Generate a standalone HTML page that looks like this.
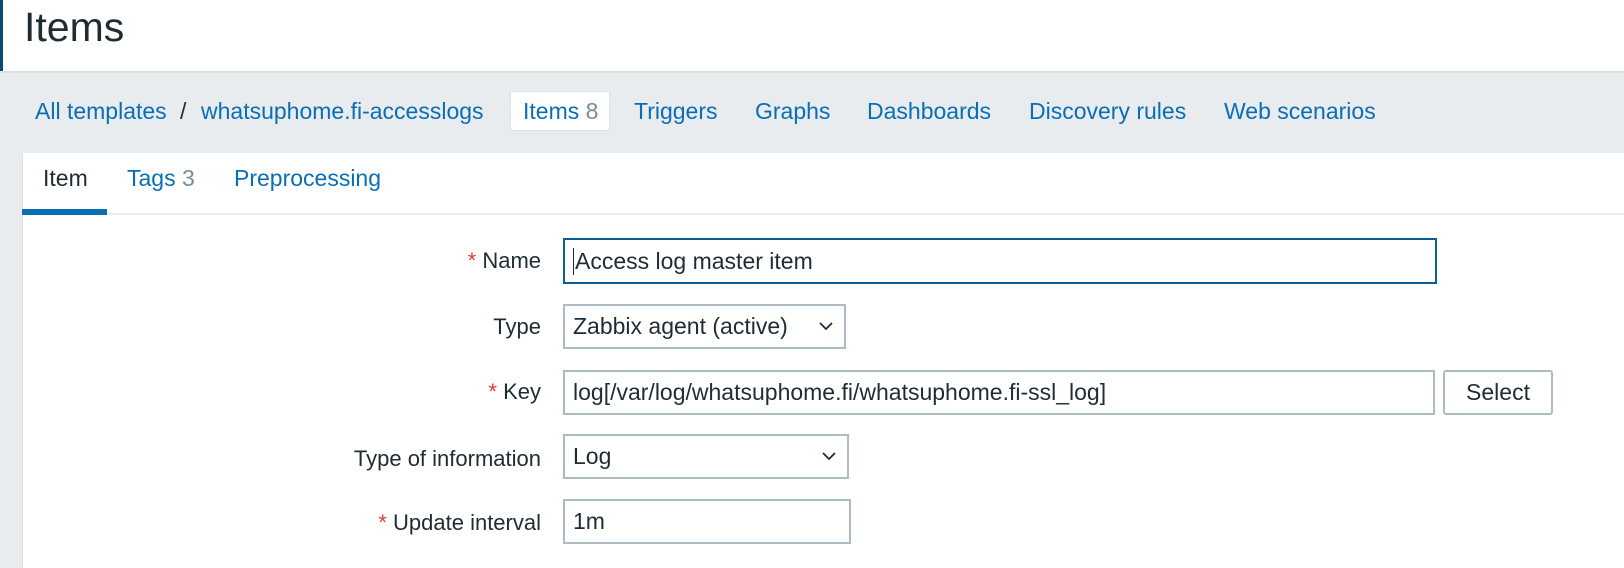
<!DOCTYPE html>
<html><head><style>
body{margin:0;width:1624px;height:568px;overflow:hidden;background:#fff;font-family:"Liberation Sans",Arial,sans-serif;position:relative}
.a{position:absolute;white-space:nowrap}
.lb{border-left:3px solid #0b4a6f;position:absolute;left:0;top:0;height:568px}
.nav{position:absolute;left:0;top:71px;width:1624px;height:80px;background:#e9ecef;border-top:2px solid #dde1e5;border-bottom:2px solid #dde1e5}
.l{color:#0a6eb4;font-size:23px}
.lab{font-size:22px;color:#1f2c33;text-align:right;width:400px;left:141px}
.st{color:#e43a3a}
.in{position:absolute;box-sizing:border-box;border:2px solid #acbbc4;background:#fff;font-size:23px;color:#1f2c33;padding-left:8px;display:flex;align-items:center}
.chev{position:absolute;right:10px;top:14px}
</style></head><body>
<div class="lb"></div>
<div class="a" style="left:24px;top:4px;font-size:41px;color:#1f2c33">Items</div>
<div class="nav"></div>
<div class="a l" style="left:35px;top:98px">All templates</div>
<div class="a" style="left:180px;top:98px;font-size:23px;color:#1f2c33">/</div>
<div class="a l" style="left:201px;top:98px">whatsuphome.fi-accesslogs</div>
<div class="a" style="left:510px;top:91px;width:100px;height:40px;box-sizing:border-box;background:#fff;border:1px solid #dfe4e7;border-radius:2px"></div>
<div class="a" style="left:523px;top:98px;font-size:23px;color:#0a6eb4">Items <span style="color:#768d99">8</span></div>
<div class="a l" style="left:634px;top:98px">Triggers</div>
<div class="a l" style="left:755px;top:98px">Graphs</div>
<div class="a l" style="left:867px;top:98px">Dashboards</div>
<div class="a l" style="left:1029px;top:98px">Discovery rules</div>
<div class="a l" style="left:1224px;top:98px">Web scenarios</div>
<div class="a" style="left:0;top:153px;width:22px;height:415px;background:#e9ecef"></div>
<div class="a" style="left:22px;top:153px;width:1602px;height:415px;background:#fff;border-left:1px solid #dde1e5"></div>
<div class="a" style="left:22px;top:213px;width:1602px;height:2px;background:#e9ecef"></div>
<div class="a" style="left:22px;top:209px;width:85px;height:6px;background:#0a6eb4"></div>
<div class="a" style="left:43px;top:165px;font-size:23px;color:#1f2c33">Item</div>
<div class="a l" style="left:127px;top:165px">Tags <span style="color:#768d99">3</span></div>
<div class="a l" style="left:234px;top:165px">Preprocessing</div>

<div class="a lab" style="top:248px"><span class="st">*</span> Name</div>
<div class="in" style="left:563px;top:238px;width:874px;height:46px;border-color:#0b5e93"><span style="border-left:1px solid #1f2c33;padding-left:1px">Access log master item</span></div>
<div class="a lab" style="top:314px">Type</div>
<div class="in" style="left:563px;top:304px;width:283px;height:45px">Zabbix agent (active)<svg class="chev" width="16" height="12"><path d="M2 3l6 6 6-6" fill="none" stroke="#1f2c33" stroke-width="1.8"/></svg></div>
<div class="a lab" style="top:379px"><span class="st">*</span> Key</div>
<div class="in" style="left:563px;top:370px;width:872px;height:45px">log[/var/log/whatsuphome.fi/whatsuphome.fi-ssl_log]</div>
<div class="in" style="left:1443px;top:370px;width:110px;height:45px;border-radius:3px;justify-content:center;padding:0">Select</div>
<div class="a lab" style="top:446px">Type of information</div>
<div class="in" style="left:563px;top:434px;width:286px;height:45px">Log<svg class="chev" width="16" height="12"><path d="M2 3l6 6 6-6" fill="none" stroke="#1f2c33" stroke-width="1.8"/></svg></div>
<div class="a lab" style="top:510px"><span class="st">*</span> Update interval</div>
<div class="in" style="left:563px;top:499px;width:288px;height:45px">1m</div>
</body></html>
